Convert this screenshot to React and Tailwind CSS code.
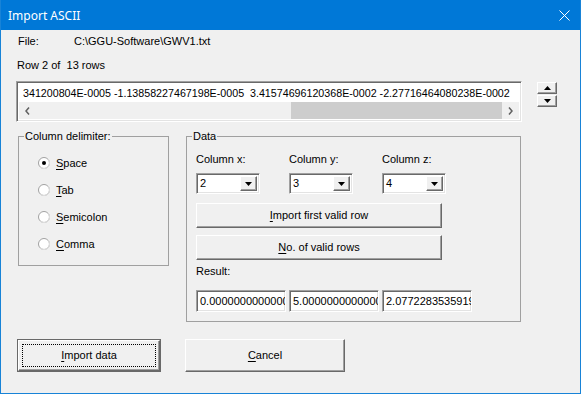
import React from 'react';

const raised = 'border border-t-white border-l-white border-b-[#696969] border-r-[#696969] shadow-[inset_-1px_-1px_0_#a0a0a0] bg-[#f0f0f0]';
const sunken = 'border border-t-[#a0a0a0] border-l-[#a0a0a0] border-b-white border-r-white shadow-[inset_1px_1px_0_#696969,inset_-1px_-1px_0_#e3e3e3] bg-white';

const Mn = ({ children }) => <span className="underline underline-offset-[2px] decoration-1">{children}</span>;

const DownTri = () => (
  <svg width="7" height="4" viewBox="0 0 7 4"><path d="M0 0h7L3.5 4z" fill="#000" /></svg>
);
const UpTri = () => (
  <svg width="7" height="4" viewBox="0 0 7 4"><path d="M0 4h7L3.5 0z" fill="#000" /></svg>
);

const Radio = ({ checked, children }) => (
  <div className="flex items-center h-[14px]">
    <svg width="12" height="12" viewBox="0 0 12 12">
      <circle cx="6" cy="6" r="5.5" fill="#fff" stroke="#a0a0a0" />
      <path d="M9.9 2.1A5.5 5.5 0 0 1 2.1 9.9" fill="none" stroke="#e3e3e3" />
      {checked && <circle cx="6" cy="6" r="2" fill="#000" />}
    </svg>
    <span className="ml-[6px]">{children}</span>
  </div>
);

const Combo = ({ value }) => (
  <div className={`${sunken} w-[64px] h-[21px] flex items-center p-[2px]`}>
    <span className="flex-1 pl-[1px] leading-none">{value}</span>
    <div className={`${raised} w-[17px] h-full flex items-center justify-center`}>
      <DownTri />
    </div>
  </div>
);

const Btn = ({ className = '', children }) => (
  <div className={`${raised} ${className} flex items-center justify-center`}>{children}</div>
);

const Group = ({ label, className = '', children }) => (
  <fieldset className={`border border-[#a0a0a0] ${className}`}>
    <legend className="ml-[5px] px-[1px] leading-[13px]">{label}</legend>
    {children}
  </fieldset>
);

export default function App() {
  return (
    <div className="w-[581px] h-[394px] flex flex-col border-x border-b border-[#1883d7] bg-[#f0f0f0] font-['Liberation_Sans',Arial,sans-serif] text-[11px] text-black leading-[13px] overflow-hidden">
      <div className="h-[30px] bg-[#0078d7] flex items-center justify-between pl-[7px] pr-[10px] text-white text-[12px] font-['Noto_Sans',sans-serif] shrink-0">
        <span>Import ASCII</span>
        <svg width="11" height="11" viewBox="0 0 11 11">
          <path d="M0.5 0.5l10 10M10.5 0.5l-10 10" stroke="#fff" strokeWidth="1" />
        </svg>
      </div>

      <div className="flex-1 flex flex-col pl-[15px] pt-[5px]">
        <div className="flex ml-[2px] h-[13px]">
          <span className="w-[56px]">File:</span>
          <span>C:\GGU-Software\GWV1.txt</span>
        </div>
        <div className="mt-[11px] ml-[1px] h-[13px] whitespace-pre">Row 2 of  13 rows</div>

        <div className="mt-[9px] flex items-start">
          <div className={`${sunken} w-[506px] h-[41px] flex flex-col p-[2px]`}>
            <div className="flex-1 pt-[3px] pl-[4px] whitespace-pre overflow-hidden text-[10.7px]">
              341200804E-0005 -1.13858227467198E-0005  3.41574696120368E-0002 -2.27716464080238E-0002
            </div>
            <div className="h-[17px] flex bg-[#f0f0f0]">
              <div className="w-[17px] flex items-center justify-center">
                <svg width="5" height="8" viewBox="0 0 5 8"><path d="M4 0.5L1 4l3 3.5" fill="none" stroke="#606060" strokeWidth="1.5" /></svg>
              </div>
              <div className="flex-1 flex justify-end">
                <div className="w-[211px] h-full bg-[#cdcdcd]" />
              </div>
              <div className="w-[17px] flex items-center justify-center">
                <svg width="5" height="8" viewBox="0 0 5 8"><path d="M1 0.5L4 4 1 7.5" fill="none" stroke="#606060" strokeWidth="1.5" /></svg>
              </div>
            </div>
          </div>
          <div className="ml-[15px] mt-[1px] w-[20px] flex flex-col gap-[1px]">
            <Btn className="h-[12px]"><UpTri /></Btn>
            <Btn className="h-[12px]"><DownTri /></Btn>
          </div>
        </div>

        <div className="mt-[8px] ml-[2px] flex items-start">
          <Group label="Column delimiter:" className="w-[151px] h-[136px]">
            <div className="pl-[19px] pt-[13px] flex flex-col gap-[13px]">
              <Radio checked><Mn>S</Mn>pace</Radio>
              <Radio><Mn>T</Mn>ab</Radio>
              <Radio><Mn>S</Mn>emicolon</Radio>
              <Radio><Mn>C</Mn>omma</Radio>
            </div>
          </Group>

          <Group label="Data" className="ml-[17px] w-[335px] h-[192px]">
            <div className="pl-[9px] pt-[10px] flex flex-col">
              <div className="flex">
                {[['Column x:', '2'], ['Column y:', '3'], ['Column z:', '4']].map(([l, v]) => (
                  <div key={l} className="w-[93px] flex flex-col gap-[7px]">
                    <span>{l}</span>
                    <Combo value={v} />
                  </div>
                ))}
              </div>
              <Btn className="mt-[9px] w-[246px] h-[25px]"><span><Mn>I</Mn>mport first valid row</span></Btn>
              <Btn className="mt-[7px] w-[246px] h-[25px]"><span><Mn>N</Mn>o. of valid rows</span></Btn>
              <div className="mt-[5px]">Result:</div>
              <div className="mt-[12px] flex gap-[3px]">
                {['0.00000000000000E+0000', '5.00000000000000E+0000', '2.07722835359195E+0000'].map((v) => (
                  <div key={v} className={`${sunken} w-[90px] h-[22px] flex items-center pl-[3px] overflow-hidden whitespace-nowrap`}>
                    {v}
                  </div>
                ))}
              </div>
            </div>
          </Group>
        </div>

        <div className="mt-[17px] ml-[1px] flex">
          <div className="w-[144px] h-[33px] border border-[#696969] flex">
            <div className={`${raised} flex-1 p-[3px] flex`}>
              <div className="flex-1 border border-dotted border-black flex items-center justify-center">
                <span><Mn>I</Mn>mport data</span>
              </div>
            </div>
          </div>
          <Btn className="ml-[24px] w-[160px] h-[33px]"><span><Mn>C</Mn>ancel</span></Btn>
        </div>
      </div>
    </div>
  );
}
